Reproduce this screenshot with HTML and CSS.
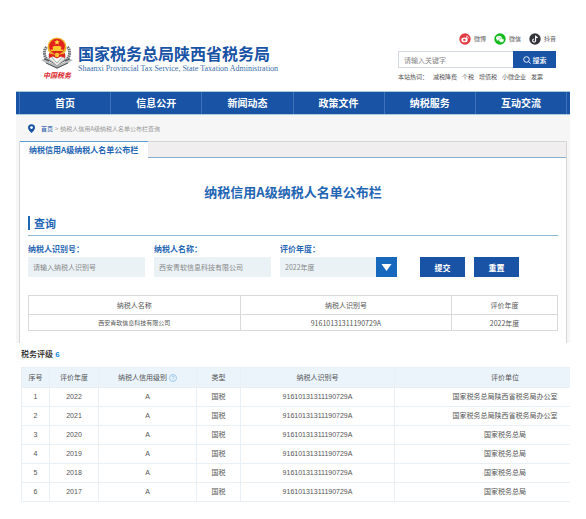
FILE: index.html
```html
<!DOCTYPE html>
<html lang="zh-CN">
<head>
<meta charset="utf-8">
<meta name="viewport" content="width=device-width, initial-scale=1">
<title>纳税信用A级纳税人名单公布栏</title>
<link rel="stylesheet" href="styles.css">
</head>
<body>
<div class="page">
  <header class="header">
    <div class="brand">
      <div class="emblem">
        <svg viewBox="0 0 32 32" width="32" height="32" aria-hidden="true">
          <path d="M5.500 10C2 14 3 21 8 24M26.500 10c3.500 4 2.500 11-2.500 14" fill="none" stroke="#6b6f71" stroke-width="3" stroke-dasharray="1.600 .6"/>
          <path d="M0 23l3-1 5 3 8 3 8-3 5-3 3 1-5 3-11 6-11-6z" fill="#b9bcbd"/>
          <path d="M3 22l6 2 7 4 7-4 6-2M5 26l11 5 11-5" fill="none" stroke="#4b4f51" stroke-width="1"/>
          <path d="M8 17l8 9 8-9v5l-8 7-8-7z" fill="#e9e9e6" stroke="#77797a" stroke-width=".6"/>
          <circle cx="16" cy="10" r="9.500" fill="#e9b52c"/>
          <circle cx="16" cy="9.500" r="7.800" fill="#e3231b"/>
          <path d="M16 2.500l.8 1.800 2 .1-1.500 1.300.5 2-1.800-1.100-1.800 1.100.5-2-1.500-1.300 2-.1z" fill="#ffdc45"/>
          <path d="M10 14h12v-1.500h-2v-2h1l-2-1.500h-6l-2 1.500h1v2h-2z" fill="#ffc72f"/>
          <path d="M8 16c3 2 13 2 16 0v5l-4-1.500-4 2-4-2L8 21z" fill="#df241b"/>
          <circle cx="16" cy="18" r="2.200" fill="#f4c238"/>
        </svg>
        <span class="motto">中国税务</span>
      </div>
      <div class="names">
        <h1 class="name">国家税务总局陕西省税务局</h1>
        <p class="name-en">Shaanxi Provincial Tax Service, State Taxation Administration</p>
      </div>
    </div>
    <div class="tools">
      <div class="social">
        <a href="#"><svg viewBox="0 0 12 12" width="12" height="12" aria-hidden="true"><circle cx="6" cy="6" r="5.700" fill="#e13c42"/><ellipse cx="5.500" cy="6.900" rx="3.200" ry="2.300" fill="#fff"/><circle cx="5.300" cy="7" r="1.300" fill="#e13c42"/><circle cx="4.900" cy="7.200" r=".5" fill="#fff"/><path d="M7 3.200c1.600-.4 2.700.7 2.300 2.200M7.100 4.500c.8-.1 1.200.3 1.100.9" fill="none" stroke="#fff" stroke-width=".7"/></svg>微博</a>
        <a href="#"><svg viewBox="0 0 12 12" width="12" height="12" aria-hidden="true"><circle cx="6" cy="6" r="5.700" fill="#12b91b"/><path d="M5 2.700c-1.800 0-3 1.100-3 2.400 0 .8.400 1.400 1 1.800l-.3 1 1.200-.6c2.300.5 4-.6 4-2.200S6.700 2.700 5 2.700z" fill="#fff"/><path d="M7.500 5.200c-1.500 0-2.600.9-2.600 2.100 0 1.300 1.400 2.300 3.200 2l1 .5-.2-.9c.7-.4 1.100-1 1.100-1.600 0-1.200-1.100-2.100-2.500-2.100z" fill="#fff" stroke="#12b91b" stroke-width=".4"/><g fill="#12b91b"><circle cx="4" cy="4.600" r=".4"/><circle cx="6" cy="4.600" r=".4"/><circle cx="6.700" cy="6.800" r=".3"/><circle cx="8.400" cy="6.800" r=".3"/></g></svg>微信</a>
        <a href="#"><svg viewBox="0 0 12 12" width="12" height="12" aria-hidden="true"><circle cx="6" cy="6" r="5.700" fill="#33343a"/><path d="M6.600 2.500v5a1.500 1.500 0 1 1-1.500-1.500M6.600 2.500c.1 1.300 1 2 2.200 2" fill="none" stroke="#fff" stroke-width="1.100"/></svg>抖音</a>
      </div>
      <form class="search">
        <input type="search" aria-label="请输入关键字" placeholder="请输入关键字">
        <button type="button"><svg viewBox="0 0 8 8" width="8" height="8" aria-hidden="true"><circle cx="3.500" cy="3.500" r="2.800" fill="none" stroke="#fff" stroke-width=".9"/><path d="M5.500 5.500L7.600 7.600" stroke="#fff" stroke-width=".9"/></svg>搜索</button>
      </form>
      <div class="hot"><span class="hot-title">本站热词：</span><a href="#">减税降费</a><a href="#">个税</a><a href="#">增值税</a><a href="#">小微企业</a><a href="#">发票</a></div>
    </div>
  </header>

  <nav class="nav">
    <a href="#">首页</a><a href="#">信息公开</a><a href="#">新闻动态</a><a href="#">政策文件</a><a href="#">纳税服务</a><a href="#">互动交流</a>
  </nav>

  <main class="main">
    <div class="crumbs">
      <svg viewBox="0 0 8 10" width="7" height="9" aria-hidden="true"><path d="M4 0a4 4 0 0 1 4 4c0 2-2 4-4 6C2 8 0 6 0 4a4 4 0 0 1 4-4z" fill="#1853a5"/><circle cx="4" cy="3.900" r="1.600" fill="#fff"/></svg>
      <a href="#">首页</a><span class="sep">&gt;</span><span>纳税人信用A级纳税人名单公布栏查询</span>
    </div>
    <section class="panel">
      <div class="tabs"><a class="tab" href="#">纳税信用A级纳税人名单公布栏</a></div>
      <div class="content">
        <h2 class="title">纳税信用A级纳税人名单公布栏</h2>
        <h3 class="query">查询</h3>
        <form class="form">
          <div class="field">
            <label for="taxid">纳税人识别号：</label>
            <input id="taxid" type="text" placeholder="请输入纳税人识别号">
          </div>
          <div class="field">
            <label for="taxname">纳税人名称：</label>
            <input id="taxname" type="text" value="西安青软信息科技有限公司">
          </div>
          <div class="field">
            <label for="year">评价年度：</label>
            <div class="picker">
              <select id="year"><option>2022年度</option></select>
              <svg class="arrow" viewBox="0 0 21 20" width="21" height="20" aria-hidden="true"><path d="M5.500 7h10l-5 7z" fill="#fff"/></svg>
            </div>
          </div>
          <button class="submit" type="button">提交</button>
          <button type="reset">重置</button>
        </form>
        <table class="result">
          <thead><tr><th>纳税人名称</th><th>纳税人识别号</th><th class="narrow">评价年度</th></tr></thead>
          <tbody><tr><td class="company">西安青软信息科技有限公司</td><td>91610131311190729A</td><td>2022年度</td></tr></tbody>
        </table>
      </div>
    </section>
  </main>

  <section class="rating">
    <h2 class="rating-title">税务评级 <span>6</span></h2>
    <div class="scroller">
      <table class="grades">
        <colgroup><col class="c1"><col class="c2"><col class="c3"><col class="c4"><col class="c5"><col></colgroup>
        <thead><tr><th>序号</th><th>评价年度</th><th>纳税人信用级别 <svg viewBox="0 0 8 8" width="8" height="8" aria-hidden="true"><circle cx="4" cy="4" r="3.500" fill="none" stroke="#7fb8e2" stroke-width=".7"/><path d="M2.900 3.200c0-1.500 2.200-1.500 2.200-.1 0 .8-1.100.8-1.100 1.700M4 5.400v.8" fill="none" stroke="#7fb8e2" stroke-width=".7"/></svg></th><th>类型</th><th>纳税人识别号</th><th>评价单位</th></tr></thead>
        <tbody>
          <tr><td>1</td><td>2022</td><td>A</td><td>国税</td><td>91610131311190729A</td><td>国家税务总局陕西省税务局办公室</td></tr>
          <tr><td>2</td><td>2021</td><td>A</td><td>国税</td><td>91610131311190729A</td><td>国家税务总局陕西省税务局办公室</td></tr>
          <tr><td>3</td><td>2020</td><td>A</td><td>国税</td><td>91610131311190729A</td><td>国家税务总局</td></tr>
          <tr><td>4</td><td>2019</td><td>A</td><td>国税</td><td>91610131311190729A</td><td>国家税务总局</td></tr>
          <tr><td>5</td><td>2018</td><td>A</td><td>国税</td><td>91610131311190729A</td><td>国家税务总局</td></tr>
          <tr><td>6</td><td>2017</td><td>A</td><td>国税</td><td>91610131311190729A</td><td>国家税务总局</td></tr>
        </tbody>
      </table>
    </div>
  </section>
</div>
</body>
</html>
```
FILE: styles.css
```css
* { box-sizing: border-box; }
body {
  margin: 0;
  background: #fff;
  color: #555;
  font-family: "Noto Sans CJK SC", sans-serif;
  font-size: 7px;
}
h1, h2, h3, p { margin: 0; }
a { color: inherit; text-decoration: none; }
svg { flex: none; }
input, select, button { font: inherit; border: 0; border-radius: 0; margin: 0; min-width: 0; }
table { border-collapse: collapse; table-layout: fixed; }
th, td { padding: 0; font-weight: 400; text-align: center; }
.page { margin: 0 16px; }

/* Header */
.header {
  display: flex;
  justify-content: space-between;
  padding: 33px 14px 9px 25px;
}
.brand { display: flex; gap: 5px; padding-top: 4px; }
.emblem { display: flex; flex-direction: column; align-items: center; }
.motto {
  color: #d8262b;
  font-size: 7px;
  font-style: italic;
  font-weight: 700;
  line-height: 12px;
}
.names { padding-top: 6px; white-space: nowrap; }
.name { color: #1853a5; font-size: 16px; line-height: 20px; }
.name-en {
  color: #3a6ea8;
  font-family: "Liberation Serif", serif;
  font-size: 8px;
  line-height: 12px;
}
.tools { width: 158px; }
.social { display: flex; justify-content: flex-end; gap: 8px; font-size: 6px; line-height: 12px; }
.social a { display: flex; gap: 3px; }
.search { display: flex; height: 17px; margin-top: 6px; }
.search input {
  flex: 1;
  padding: 0 5px;
  border: 1px solid #d5dae0;
  border-right: 0;
  background: #fff;
}
.search button {
  display: flex;
  align-items: center;
  justify-content: center;
  gap: 2px;
  width: 43px;
  padding: 0;
  background: #1853a5;
  color: #fff;
  font-weight: 500;
}
::placeholder { color: #888; opacity: 1; }
.hot { display: flex; gap: 5px; margin-top: 4px; font-size: 6px; line-height: 10px; white-space: nowrap; }

/* Navigation */
.nav {
  display: flex;
  padding: 0 3px;
  border: solid #a9cbdc;
  border-width: 1px 0;
  background: #1853a5;
  color: #fff;
  font-size: 10px;
  font-weight: 700;
  line-height: 22px;
}
.nav a { flex: 1; border-left: 1px solid #3f72b8; text-align: center; }
.nav a:last-child { border-right: 1px solid #3f72b8; }

/* Query panel */
.main { padding: 0 3px; background: #f6f6f6; }
.crumbs { display: flex; align-items: center; height: 26px; padding-left: 9px; color: #999; font-size: 6px; }
.crumbs a { margin-left: 6px; color: #1853a5; }
.sep { margin: 0 2px; }
.panel { border: solid #d6d6d8; border-width: 0 1px; background: #fff; }
.tabs { display: flex; height: 17px; background: linear-gradient(#d6d6d8 1px, #f0eeee 1px 16px, #87aed0 16px); }
.tab {
  padding: 0 10px 0 9px;
  border-top: 1px solid #5f9fd6;
  background: #fff;
  color: #1f66b4;
  font-size: 8px;
  font-weight: 700;
  line-height: 16px;
}
.content { padding: 24px 8px 12px; }
.title { color: #1f66b4; font-size: 13px; line-height: 20px; text-align: center; }
.query {
  display: flex;
  align-items: center;
  gap: 4px;
  margin-top: 14px;
  padding-bottom: 5px;
  border-bottom: 1px solid #8fb9d2;
  color: #1f66b4;
  font-size: 11px;
  line-height: 14px;
}
.query::before { content: ""; width: 2px; height: 14px; background: #1f66b4; }
.form { display: flex; align-items: flex-end; gap: 9px; margin-top: 7px; padding-right: 39px; }
.field { flex: 13 1 0; min-width: 0; color: #777; }
.field label {
  display: block;
  margin-bottom: 2px;
  color: #1f66b4;
  font-size: 8px;
  font-weight: 700;
  line-height: 12px;
}
.field input, .field select {
  display: block;
  width: 100%;
  height: 20px;
  padding: 0 5px;
  background: #eaf2f6;
  color: #888;
}
.field select { flex: 1; appearance: none; }
.picker { display: flex; }
.arrow { background: #1668bd; }
.form button {
  flex: 5 1 0;
  height: 20px;
  padding: 0;
  background: #1853a5;
  color: #fff;
  font-size: 8px;
  font-weight: 700;
}
.form .submit { margin-left: 14px; }
.result { width: 100%; height: 36px; margin-top: 18px; }
.result th, .result td { border: 1px solid #d9d9d9; line-height: 14px; }
.result th { height: 19px; }
.result .narrow { width: 20%; }
.result .company { font-size: 6px; }

/* Rating list */
.rating { padding: 5px 0 0 5px; font-family: "Liberation Sans", "Noto Sans CJK SC", sans-serif; }
.rating-title { margin-bottom: 5px; color: #222; font-size: 8px; font-weight: 500; line-height: 14px; }
.rating-title span { color: #1888e8; font-weight: 700; }
.scroller { overflow: hidden; }
.grades { width: calc(100% + 46px); height: 135px; }
.grades th, .grades td { border: 1px solid #e8eff5; line-height: 14px; }
.grades th { height: 20px; background: #ebf4fb; }
.grades svg { vertical-align: -2px; }
.c1 { width: 28px; }
.c2 { width: 49px; }
.c3 { width: 98px; }
.c4 { width: 44px; }
.c5 { width: 154px; }
```
